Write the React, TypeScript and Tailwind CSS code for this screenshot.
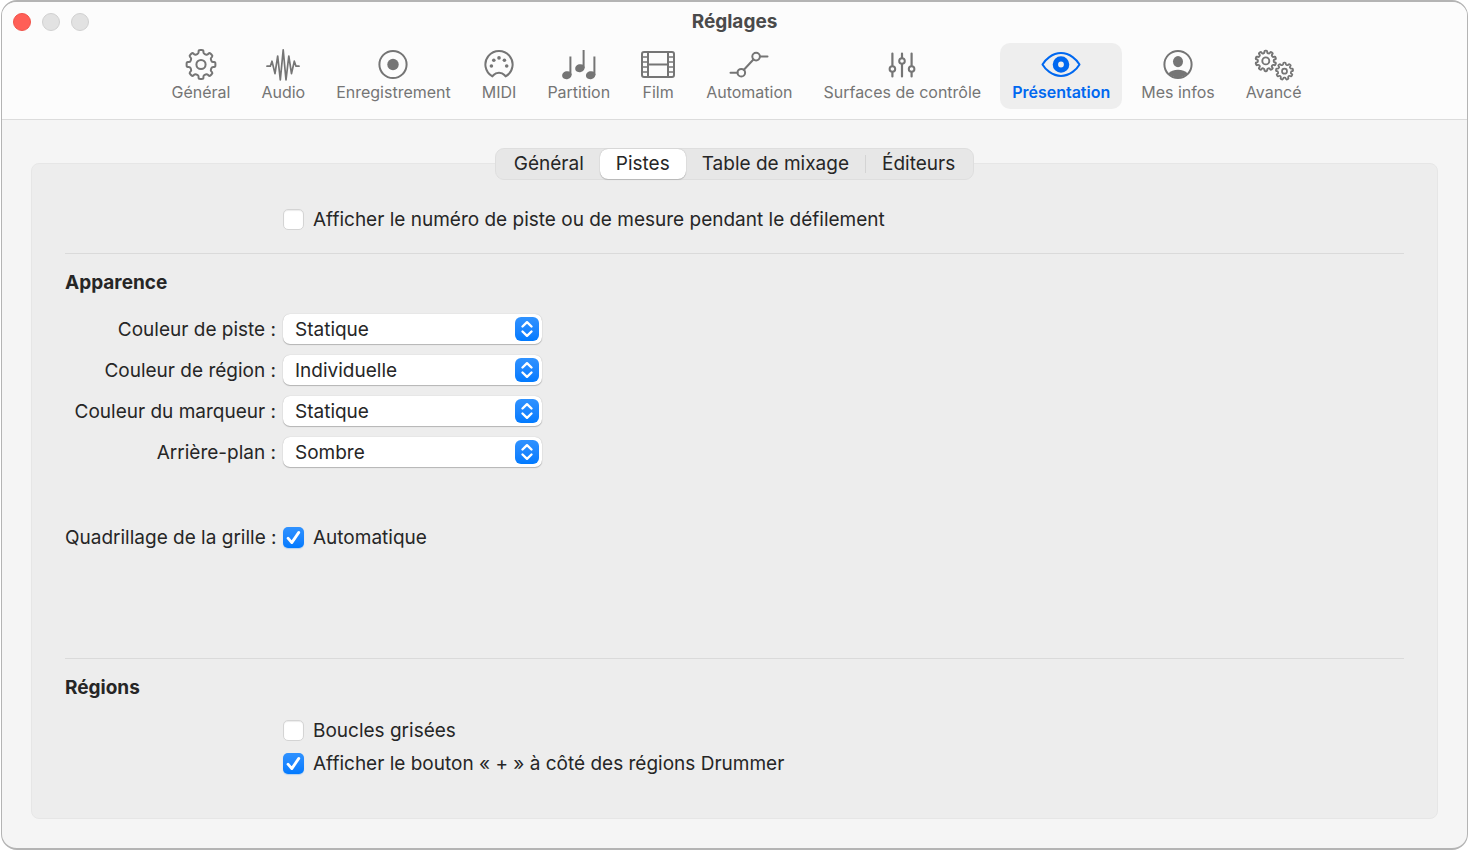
import { useState } from "react";
import type { ReactNode } from "react";
import clsx from "clsx";

// Closed gear outline with softened corners
function gearPath(cx: number, cy: number, outer: number, inner: number, teeth: number) {
  const step = (Math.PI * 2) / teeth;
  const pts: [number, number][] = [];
  for (let i = 0; i < teeth; i++) {
    const a = i * step - Math.PI / 2;
    const corners: [number, number][] = [
      [a - step * 0.28, inner],
      [a - step * 0.21, outer],
      [a + step * 0.21, outer],
      [a + step * 0.28, inner],
    ];
    corners.forEach(([angle, r]) => pts.push([cx + Math.cos(angle) * r, cy + Math.sin(angle) * r]));
  }
  const mix = (p: [number, number], q: [number, number], t: number) =>
    `${(p[0] + (q[0] - p[0]) * t).toFixed(2)} ${(p[1] + (q[1] - p[1]) * t).toFixed(2)}`;
  const parts = pts.map((p, i) => {
    const prev = pts[(i + pts.length - 1) % pts.length];
    const next = pts[(i + 1) % pts.length];
    return `${i === 0 ? "M" : "L"}${mix(p, prev, 0.35)} Q${p[0].toFixed(2)} ${p[1].toFixed(2)} ${mix(p, next, 0.35)}`;
  });
  return `${parts.join(" ")}Z`;
}

interface IconProps {
  wide?: boolean;
  children: ReactNode;
}

function Icon({ wide, children }: IconProps) {
  return (
    <svg
      viewBox={wide ? "0 0 40 32" : "0 0 34 32"}
      className={clsx("h-8", wide ? "w-10" : "w-[34px]")}
      fill="none"
      stroke="currentColor"
      strokeWidth="2"
      strokeLinecap="round"
      strokeLinejoin="round"
      aria-hidden="true"
    >
      {children}
    </svg>
  );
}

const GearIcon = (
  <Icon>
    <path d={gearPath(17, 15.5, 14.6, 11.2, 8)} />
    <circle cx="17" cy="15.5" r="4.6" />
  </Icon>
);

const WaveIcon = (
  <Icon>
    <path
      strokeWidth="1.7"
      d="M1 17.2H4.3L6 12.2L9 24.6L11.7 7L14.3 31L17.2 .9L20 31L22.8 7L25.5 24.6L28.3 12.2L30 17.2H33"
    />
  </Icon>
);

const RecordIcon = (
  <Icon>
    <circle cx="17" cy="15.5" r="13.6" />
    <circle cx="17" cy="15.5" r="5.7" fill="currentColor" stroke="none" />
  </Icon>
);

const MidiIcon = (
  <Icon>
    <path d="M10.4 27.4A13.6 13.6 0 1 1 23.6 27.4L22.4 26C21.2 24.6 19.4 23.8 17 23.8S12.8 24.6 11.6 26Z" />
    <g fill="currentColor" stroke="none">
      <circle cx="9.4" cy="17" r="1.8" />
      <circle cx="11.8" cy="11.3" r="1.8" />
      <circle cx="17" cy="8.9" r="1.8" />
      <circle cx="22.4" cy="11.3" r="1.8" />
      <circle cx="24.7" cy="17" r="1.8" />
    </g>
  </Icon>
);

const NotesIcon = (
  <Icon>
    <path strokeLinecap="butt" d="M8.4 7.5V26M21.6 1V19M32.4 7.5V26" />
    <g fill="currentColor" stroke="none">
      <ellipse cx="4.9" cy="26.2" rx="4.8" ry="4" transform="rotate(-15 4.9 26.2)" />
      <ellipse cx="17.9" cy="19.2" rx="4.8" ry="4" transform="rotate(-15 17.9 19.2)" />
      <ellipse cx="28.7" cy="26.2" rx="4.8" ry="4" transform="rotate(-15 28.7 26.2)" />
    </g>
  </Icon>
);

const FilmIcon = (
  <Icon>
    <rect x="1" y="3" width="32" height="25" rx="2" />
    <path d="M7 3V28M27 3V28M7 15.5H27" />
    <path strokeWidth="1.7" d="M1 8H7M1 13H7M1 18H7M1 23H7M27 8H33M27 13H33M27 18H33M27 23H33" />
  </Icon>
);

const AutomationIcon = (
  <Icon wide>
    <path d="M1.5 23.7H8.5M14.9 20.7L24.4 10.5M31 7.6H38.5" />
    <circle cx="12.3" cy="23.7" r="3.8" />
    <circle cx="27.1" cy="7.6" r="3.8" />
  </Icon>
);

const FadersIcon = (
  <Icon>
    <path strokeWidth="2.2" d="M7.4 4.5V16.5M7.4 23.5V27.5M17 4.5V8.5M17 15.5V27.5M26.6 4.5V16.5M26.6 23.5V27.5" />
    <circle cx="7.4" cy="20" r="2.8" />
    <circle cx="17" cy="12" r="2.8" />
    <circle cx="26.6" cy="20" r="2.8" />
  </Icon>
);

const EyeIcon = (
  <Icon wide>
    <path d="M1.5 15.5C4 11 11 4.1 20 4.1S36 11 38.5 15.5C36 20 29 26.9 20 26.9S4 20 1.5 15.5Z" />
    <circle cx="20" cy="15.5" r="5.6" strokeWidth="5.4" />
  </Icon>
);

const PersonIcon = (
  <Icon>
    <circle cx="17" cy="15.5" r="13.6" />
    <ellipse cx="17" cy="12.6" rx="5" ry="5.6" fill="currentColor" stroke="none" />
    <path d="M7.4 24.6C9.5 22 13 20.8 17 20.8S24.5 22 26.6 24.6A13.6 13.6 0 0 1 7.4 24.6Z" fill="currentColor" stroke="none" />
  </Icon>
);

const GearsIcon = (
  <Icon wide>
    <g strokeWidth="1.9">
      <path d={gearPath(11.8, 11.9, 10.4, 8, 10)} />
      <circle cx="11.8" cy="11.9" r="3.5" />
    </g>
    <g strokeWidth="1.7">
      <path d={gearPath(30.5, 22.2, 8.7, 6.6, 9)} />
      <circle cx="30.5" cy="22.2" r="2.5" />
    </g>
  </Icon>
);

const sections = [
  { label: "Général", icon: GearIcon },
  { label: "Audio", icon: WaveIcon },
  { label: "Enregistrement", icon: RecordIcon },
  { label: "MIDI", icon: MidiIcon },
  { label: "Partition", icon: NotesIcon },
  { label: "Film", icon: FilmIcon },
  { label: "Automation", icon: AutomationIcon },
  { label: "Surfaces de contrôle", icon: FadersIcon },
  { label: "Présentation", icon: EyeIcon },
  { label: "Mes infos", icon: PersonIcon },
  { label: "Avancé", icon: GearsIcon },
];

const tabs = ["Général", "Pistes", "Table de mixage", "Éditeurs"];

const colorOptions = ["Statique", "Individuelle"];

const popups = [
  { id: "track-color", label: "Couleur de piste :", value: "Statique", options: colorOptions },
  { id: "region-color", label: "Couleur de région :", value: "Individuelle", options: colorOptions },
  { id: "marker-color", label: "Couleur du marqueur :", value: "Statique", options: colorOptions },
  { id: "background", label: "Arrière-plan :", value: "Sombre", options: ["Sombre", "Clair"] },
];

interface CheckboxProps {
  label: string;
  defaultChecked?: boolean;
}

function Checkbox({ label, defaultChecked }: CheckboxProps) {
  return (
    <label className="col-start-2 flex h-[30px] items-center gap-[9px] justify-self-start">
      <span className="grid place-items-center">
        <input
          type="checkbox"
          defaultChecked={defaultChecked}
          className="peer col-start-1 row-start-1 size-[21px] appearance-none rounded-[5px] border border-[#d4d4d4] bg-white shadow-[inset_0_1px_1px_rgba(0,0,0,0.08)] checked:border-transparent checked:bg-[#0f7fff] checked:bg-linear-to-b checked:from-[#2f92ff] checked:to-[#007aff] checked:bg-origin-border checked:shadow-[0_1px_1px_rgba(0,122,255,0.25)]"
        />
        <svg
          viewBox="0 0 21 21"
          className="pointer-events-none col-start-1 row-start-1 hidden size-[21px] peer-checked:block"
          fill="none"
          stroke="white"
          strokeWidth="2.8"
          strokeLinecap="round"
          strokeLinejoin="round"
          aria-hidden="true"
        >
          <path d="M5 11.2L8.8 15.6L15.8 5.4" />
        </svg>
      </span>
      <span className="pt-0.5">{label}</span>
    </label>
  );
}

interface PopupProps {
  id: string;
  label: string;
  value: string;
  options: string[];
}

function Popup({ id, label, value, options }: PopupProps) {
  return (
    <>
      <label htmlFor={id} className="pt-0.5 text-right whitespace-nowrap">
        {label}
      </label>
      <div className="relative w-[259px]">
        <select
          id={id}
          defaultValue={value}
          className="block h-[30px] w-full appearance-none rounded-[7px] bg-white pt-0.5 pr-10 pl-3 shadow-[0_0_1px_rgba(0,0,0,0.25),0_1px_1px_rgba(0,0,0,0.22)]"
        >
          {options.map((option) => (
            <option key={option}>{option}</option>
          ))}
        </select>
        <svg
          viewBox="0 0 24 24"
          className="pointer-events-none absolute top-[3px] right-[3px] size-6 rounded-[6px] bg-linear-to-b from-[#2f92ff] to-[#007aff]"
          fill="none"
          stroke="white"
          strokeWidth="2.4"
          strokeLinecap="round"
          strokeLinejoin="round"
          aria-hidden="true"
        >
          <path d="M7.5 9.5L12 5.2L16.5 9.5M7.5 14.5L12 18.8L16.5 14.5" />
        </svg>
      </div>
    </>
  );
}

function Toolbar() {
  const [section, setSection] = useState("Présentation");

  return (
    <header className="border-b border-[#dcdcdc] bg-[#fcfcfc] pb-[10px]">
      <div className="grid h-10 grid-cols-[1fr_auto_1fr] items-center px-[11px]">
        <div className="flex gap-[11px]">
          <button type="button" aria-label="Fermer" className="size-[18px] rounded-full border border-[#f0534a] bg-[#ff5f57]" />
          <button type="button" aria-label="Réduire" className="size-[18px] rounded-full border border-[#d0d0d0] bg-[#e2e2e2]" />
          <button type="button" aria-label="Agrandir" className="size-[18px] rounded-full border border-[#d0d0d0] bg-[#e2e2e2]" />
        </div>
        <h1 className="text-[19px] leading-6 font-bold text-[#4a4a4a]">Réglages</h1>
      </div>
      <nav className="flex justify-center gap-[7px] pt-px pl-1">
        {sections.map(({ label, icon }) => (
          <button
            key={label}
            type="button"
            onClick={() => setSection(label)}
            className={clsx(
              "flex flex-col items-center rounded-[10px] px-3 py-[6px] text-[16px] leading-[22px] whitespace-nowrap",
              label === section ? "bg-[#eeeeee] font-semibold text-[#0068f0]" : "text-[#757575]",
            )}
          >
            {icon}
            {label}
          </button>
        ))}
      </nav>
    </header>
  );
}

export default function App() {
  const [tab, setTab] = useState("Pistes");

  return (
    <div className="flex min-h-screen bg-white pb-px pl-px font-['Inter','Liberation_Sans',sans-serif]">
      <div className="flex flex-1 flex-col overflow-hidden rounded-[16px] border-x border-y-2 border-[#b4b4b4] bg-[#f5f5f5]">
        <Toolbar />

        <main className="flex flex-1 flex-col px-[29px] pt-7 pb-[29px] text-[19px] leading-6 text-[#262626]">
          <div role="tablist" className="relative z-10 -mb-[17px] flex items-center self-center rounded-[9px] border border-[#dedede] bg-[#e7e7e7] px-0.5">
            {tabs.map((name, i) => (
              <div key={name} className="flex items-center">
                {i === 3 && <span className="h-[18px] w-px bg-[#d4d4d4]" />}
                <button
                  type="button"
                  role="tab"
                  aria-selected={tab === name}
                  onClick={() => setTab(name)}
                  className={clsx(
                    "h-[30px] rounded-[8px] px-4",
                    tab === name && "bg-white shadow-[0_0_1px_rgba(0,0,0,0.3),0_1px_1px_rgba(0,0,0,0.15)]",
                  )}
                >
                  {name}
                </button>
              </div>
            ))}
          </div>

          <div role="tabpanel" className="flex-1 rounded-[8px] border border-[#e6e6e6] bg-[#ededed] px-[33px]">
            <section className="grid grid-cols-[211px_1fr] gap-x-[7px] border-b border-[#dadada] pt-10 pb-[19px]">
              <Checkbox label="Afficher le numéro de piste ou de mesure pendant le défilement" />
            </section>

            <section className="border-b border-[#dadada] pt-[17px] pb-[106px]">
              <h2 className="font-bold">Apparence</h2>
              <div className="mt-[19px] grid grid-cols-[211px_1fr] items-center gap-x-[7px] gap-y-[11px]">
                {popups.map((popup) => (
                  <Popup key={popup.id} {...popup} />
                ))}
              </div>
              <div className="mt-[55px] grid grid-cols-[211px_1fr] items-center gap-x-[7px]">
                <span className="pt-0.5 text-right whitespace-nowrap">Quadrillage de la grille :</span>
                <Checkbox label="Automatique" defaultChecked />
              </div>
            </section>

            <section className="pt-[17px]">
              <h2 className="font-bold">Régions</h2>
              <div className="mt-[15px] grid grid-cols-[211px_1fr] gap-x-[7px] gap-y-[3px]">
                <Checkbox label="Boucles grisées" />
                <Checkbox label="Afficher le bouton « + » à côté des régions Drummer" defaultChecked />
              </div>
            </section>
          </div>
        </main>
      </div>
    </div>
  );
}
